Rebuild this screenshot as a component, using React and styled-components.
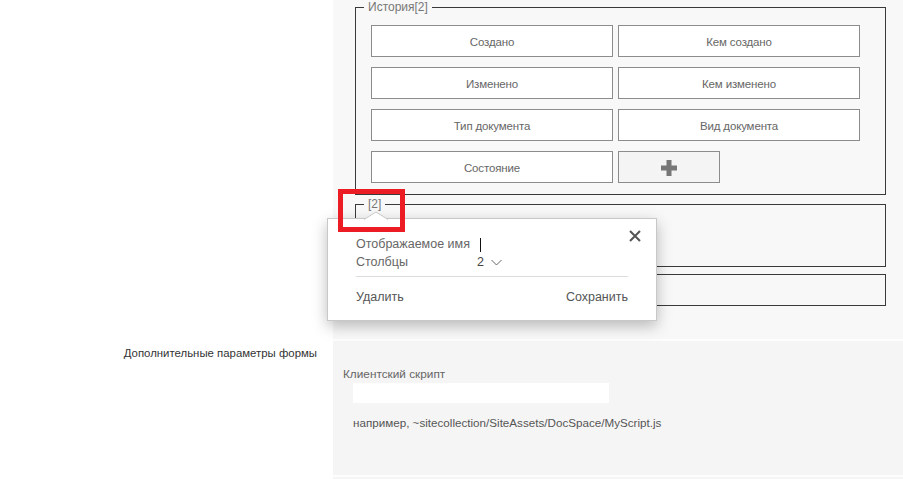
import React from "react";
import styled, { createGlobalStyle } from "styled-components";

const GlobalStyle = createGlobalStyle`
  html, body { margin: 0; padding: 0; background: #fff; }
  body {
    font-family: "Liberation Sans", Arial, sans-serif;
    overflow: hidden;
  }
  * { box-sizing: border-box; }
`;

const Page = styled.div`
  display: grid;
  grid-template-columns: 333px 1fr;
  width: 903px;
`;

const RowLabel = styled.div`
  padding: ${(p) => p.$top || 0}px 16px 0 0;
  text-align: right;
  font-size: 11.4px;
  line-height: 16px;
  color: #333;
`;

const Panel = styled.div`
  height: ${(p) => p.$h}px;
  background: ${(p) => p.$bg || "#f8f8f8"};
  border-bottom: 2px solid #fdfdfd;
  padding: ${(p) => p.$pad || "0"};
`;

const Canvas = styled.div`
  position: relative;
`;

const Group = styled.fieldset`
  margin: ${(p) => p.$mt || 0}px 0 0;
  padding: ${(p) => p.$pad || "11px 25px 11px 15px"};
  border: 1px solid #3a3a3a;
  min-width: 0;
  height: ${(p) => (p.$h ? `${p.$h}px` : "auto")};
`;

const Caption = styled.legend`
  margin-left: -7px;
  padding: 0 4px;
  font-size: 12px;
  line-height: 14px;
  color: #777;
`;

const FieldGrid = styled.div`
  display: grid;
  grid-template-columns: 242px 242px;
  gap: 10px 5px;
  min-height: ${(p) => p.$minH || 0}px;
`;

const FieldTile = styled.div`
  height: 32px;
  width: ${(p) => (p.$add ? "102px" : "auto")};
  border: 1px solid #8c8c8c;
  background: ${(p) => (p.$add ? "#f4f4f4" : "#fff")};
  display: flex;
  align-items: center;
  justify-content: center;
  padding-top: 1px;
  font-size: 11.5px;
  letter-spacing: -0.15px;
  color: #666;
`;

const Popover = styled.div`
  position: absolute;
  left: -28px;
  top: 218px;
  width: 330px;
  height: 103px;
  background: #fff;
  border: 1px solid #c8c8c8;
  box-shadow: 0 5px 14px rgba(0, 0, 0, 0.26);
  padding: 16px 28px 0;
  font-size: 12.5px;
  color: #666;
  z-index: 2;
`;

const Pointer = styled.svg`
  position: absolute;
  left: 36px;
  top: -8px;
`;

const CloseButton = styled.button`
  position: absolute;
  top: 10px;
  right: 15px;
  width: 13px;
  height: 13px;
  padding: 0;
  border: 0;
  background: none;
  display: flex;
  align-items: center;
  justify-content: center;
  cursor: pointer;
`;

const FieldRow = styled.div`
  display: grid;
  grid-template-columns: 121px 1fr;
  align-items: center;
  line-height: 18px;
`;

const Caret = styled.span`
  display: inline-block;
  width: 1px;
  height: 14px;
  margin-left: 3px;
  background: #111;
  vertical-align: middle;
`;

const Select = styled.span`
  display: inline-flex;
  align-items: center;
  gap: 7px;
  color: #444;
`;

const Divider = styled.div`
  height: 1px;
  background: #dcdcdc;
  margin: 5px 0 11px;
`;

const Actions = styled.div`
  display: flex;
  justify-content: space-between;
  line-height: 18px;
  color: #555;
`;

const Highlight = styled.div`
  position: absolute;
  left: -17px;
  top: 189px;
  width: 67px;
  height: 43px;
  border: 5px solid #ec1c24;
  z-index: 3;
`;

const SmallLabel = styled.div`
  font-size: 11.8px;
  line-height: 16px;
  color: #666;
`;

const TextBox = styled.div`
  width: 256px;
  height: 20px;
  margin: 1px 0 0 10px;
  background: #fff;
`;

const Hint = styled.div`
  margin: 12px 0 0 10px;
  font-size: 11.65px;
  line-height: 16px;
  color: #555;
`;

const historyFields = [
  "Создано",
  "Кем создано",
  "Изменено",
  "Кем изменено",
  "Тип документа",
  "Вид документа",
  "Состояние",
];

function PlusIcon() {
  return (
    <svg width="16" height="16" viewBox="0 0 16 16">
      <rect x="5.5" y="0" width="5" height="16" fill="#777" />
      <rect x="0" y="5.5" width="16" height="5" fill="#777" />
    </svg>
  );
}

export default function App() {
  return (
    <>
      <GlobalStyle />
      <Page>
        <RowLabel />
        <Panel $h={341} $pad="0 17px 0 22px">
          <Canvas>
            <Group>
              <Caption>История[2]</Caption>
              <FieldGrid>
                {historyFields.map((f) => (
                  <FieldTile key={f}>{f}</FieldTile>
                ))}
                <FieldTile $add>
                  <PlusIcon />
                </FieldTile>
              </FieldGrid>
            </Group>
            <Group $mt={2}>
              <Caption>[2]</Caption>
              <FieldGrid $minH={33} />
            </Group>
            <Group $mt={7} $h={32} $pad="0" />

            <Popover>
              <Pointer width="24" height="9" viewBox="0 0 24 9">
                <path d="M0 8.5 L12 1 L24 8.5" fill="#fff" stroke="#c8c8c8" />
              </Pointer>
              <CloseButton aria-label="Закрыть">
                <svg width="12" height="12" viewBox="0 0 12 12">
                  <path d="M1 1 L11 11 M11 1 L1 11" stroke="#555" strokeWidth="2" />
                </svg>
              </CloseButton>
              <FieldRow>
                <span>Отображаемое имя</span>
                <span>
                  <Caret />
                </span>
              </FieldRow>
              <FieldRow>
                <span>Столбцы</span>
                <Select>
                  2
                  <svg width="11" height="7" viewBox="0 0 11 7">
                    <path d="M0.5 1 L5.5 6 L10.5 1" fill="none" stroke="#666" strokeWidth="1" />
                  </svg>
                </Select>
              </FieldRow>
              <Divider />
              <Actions>
                <span>Удалить</span>
                <span>Сохранить</span>
              </Actions>
            </Popover>
            <Highlight />
          </Canvas>
        </Panel>

        <RowLabel $top={4}>Дополнительные параметры формы</RowLabel>
        <Panel $h={136} $bg="#f5f5f5" $pad="25px 0 0 10px">
          <SmallLabel>Клиентский скрипт</SmallLabel>
          <TextBox />
          <Hint>например, ~sitecollection/SiteAssets/DocSpace/MyScript.js</Hint>
        </Panel>

        <RowLabel />
        <Panel $h={20} $bg="#f5f5f5" />
      </Page>
    </>
  );
}
